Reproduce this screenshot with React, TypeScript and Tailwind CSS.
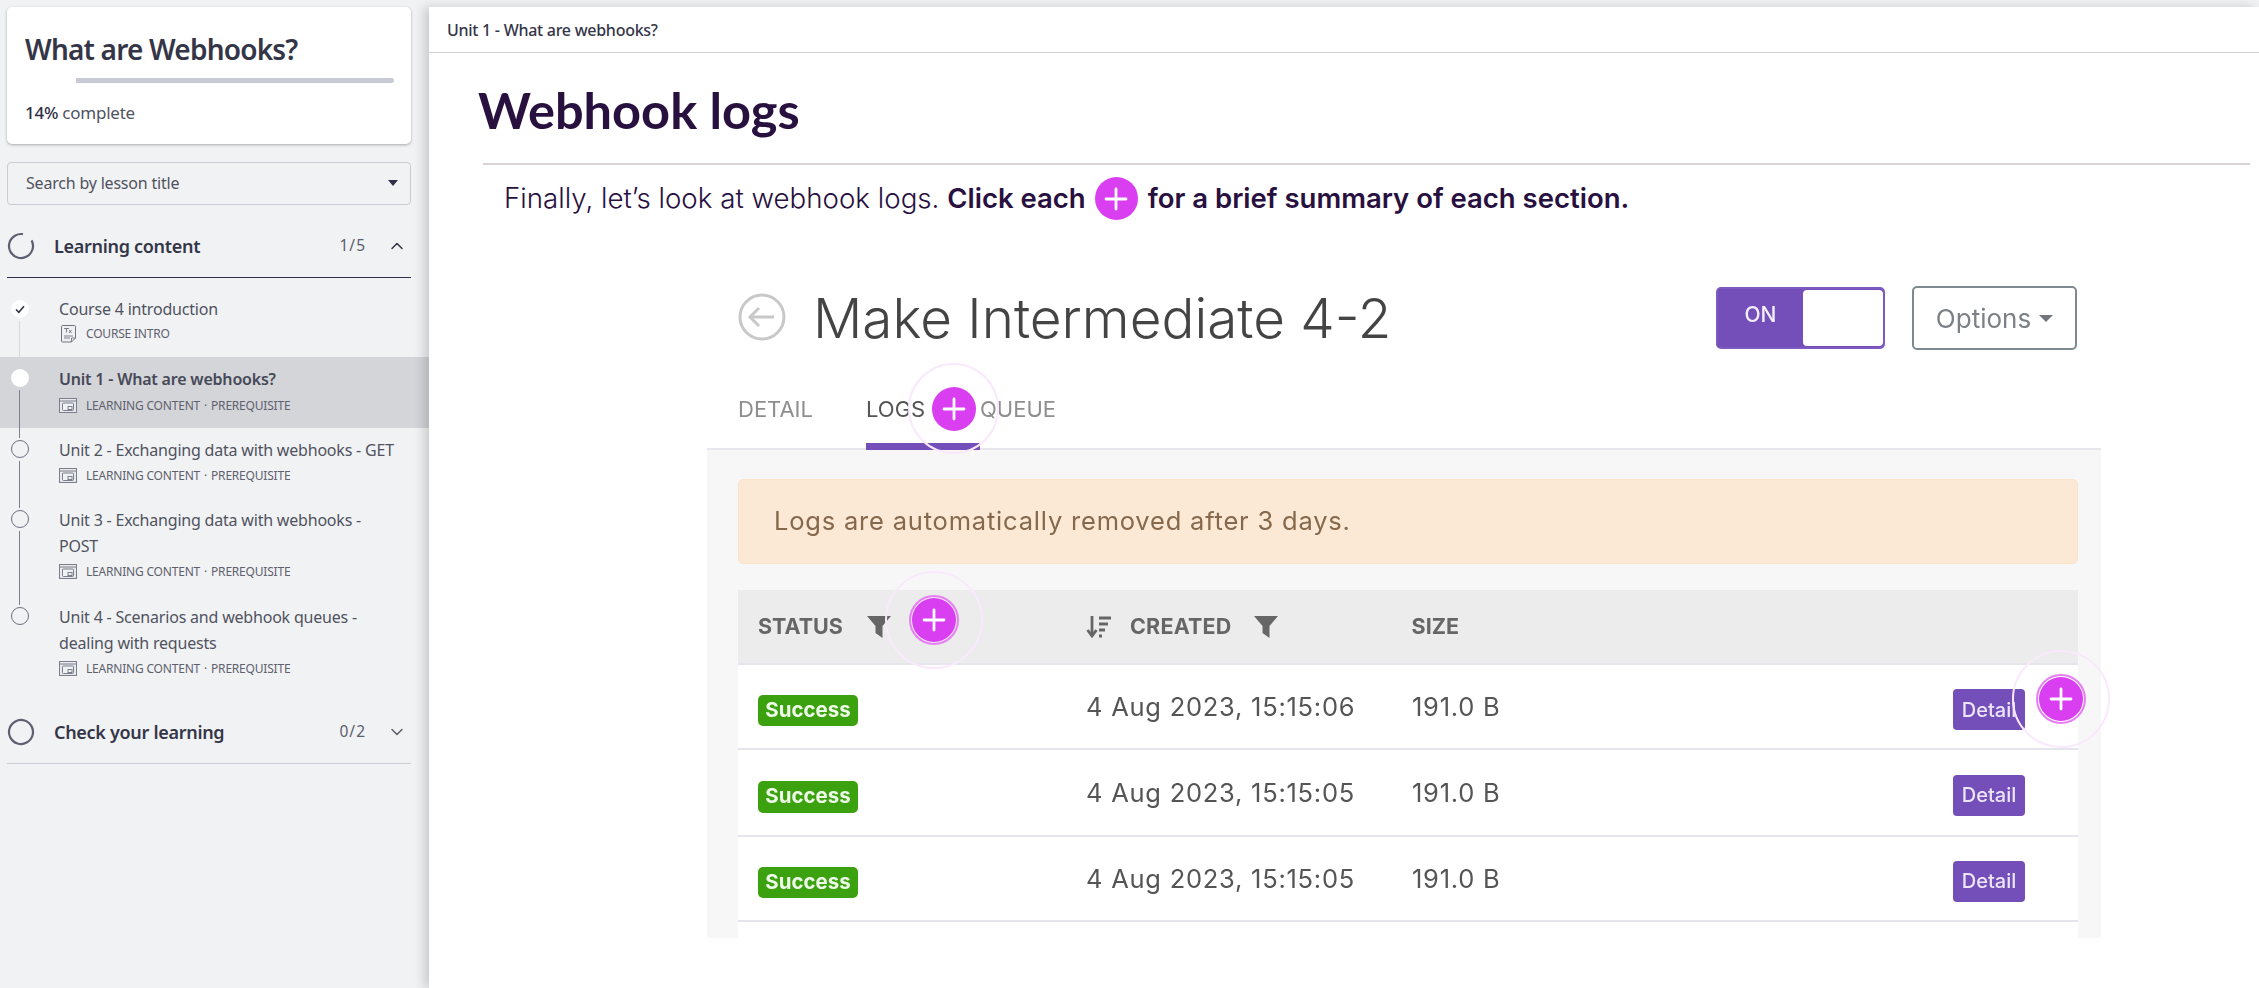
import { ChevronUp, ChevronDown } from "lucide-react";

const sans = "font-['Noto_Sans','Open_Sans',sans-serif]";

function Plus({ size = 24 }: { size?: number }) {
  return (
    <svg width={size} height={size} viewBox="0 0 24 24" fill="none" stroke="white" strokeWidth="2.8" strokeLinecap="round">
      <path d="M12 2v20M2 12h20" />
    </svg>
  );
}

function Hotspot({ className, ring }: { className: string; ring?: boolean }) {
  return (
    <div className={`absolute flex items-center justify-center rounded-full border-2 border-[#fae9fd] ${className}`}>
      <div className={`flex h-[44px] w-[44px] items-center justify-center rounded-full bg-[#d93ef0] ${ring ? "outline-2 outline-offset-1 outline-[#e77ef5]" : ""}`}>
        <Plus />
      </div>
    </div>
  );
}

function ContentIcon() {
  return (
    <svg width="18" height="16" viewBox="0 0 18 16" fill="none" stroke="#7b7e8c" strokeWidth="1" className="shrink-0">
      <rect x="0.5" y="0.5" width="17" height="14" fill="#e8e9ed" />
      <path d="M0.5 3h17" />
      <rect x="3.5" y="5" width="11" height="7.5" rx="1" fill="#f1f2f4" />
      <rect x="9" y="8.5" width="4" height="3" fill="#f1f2f4" />
    </svg>
  );
}

function IntroIcon() {
  return (
    <svg width="15" height="18" viewBox="0 0 15 18" fill="none" stroke="#71747f" strokeWidth="1" className="shrink-0">
      <path d="M1.5.5h12a1 1 0 0 1 1 1V13l-4 4H1.5a1 1 0 0 1-1-1V1.5a1 1 0 0 1 1-1z" fill="#eef0f3" />
      <path d="M3 3.5h5M5.5 3.5v4M8 5l2.5 3M10.5 5 8 8M3 11h9M3 13h6M10.500 17v-4h4" strokeWidth="0.9" />
    </svg>
  );
}

function Lesson(props: {
  title: string[];
  sub: string[];
  intro?: boolean;
  active?: boolean;
  done?: boolean;
  first?: boolean;
  last?: boolean;
  lineIn?: string;
  lineOut?: string;
  pt: string;
  mt: string;
  pb: string;
}) {
  const { title, sub, intro, active, done, first, last, lineIn, lineOut, pt, mt, pb } = props;
  return (
    <div className={`flex w-[429px] ${active ? "bg-[#d4d5d9]" : ""}`}>
      <div className="ml-[11px] flex w-[17px] shrink-0 flex-col items-center">
        <div className={`h-[10px] w-px ${first ? "" : lineIn}`} />
        <div className="h-[2px]" />
        <div
          className={`flex h-[18px] w-[18px] shrink-0 items-center justify-center rounded-full ${
            done || active ? "bg-white" : "border border-[#6d7080]"
          }`}
        >
          {done && (
            <svg width="10" height="9" viewBox="0 0 10 9" fill="none" stroke="#2d2f45" strokeWidth="1.5">
              <path d="M1 4.500 3.800 7.300 9 1.300" />
            </svg>
          )}
        </div>
        <div className="h-[3px]" />
        <div className={`w-px flex-1 ${last ? "" : lineOut}`} />
      </div>
      <div className={`ml-[31px] w-[340px] ${pt} ${pb}`}>
        {title.map((t) => (
          <div
            key={t}
            className={`h-[26px] whitespace-nowrap text-[16px] leading-[26px] tracking-[-0.2px] ${
              active ? "font-semibold text-[#464958]" : "text-[#50535f]"
            }`}
          >
            {t}
          </div>
        ))}
        <div className={`flex h-[24px] items-center gap-[9px] ${mt}`}>
          {intro ? <span className="ml-[2px] mr-[1px] flex"><IntroIcon /></span> : <ContentIcon />}
          <span className="flex items-center gap-[4px] whitespace-nowrap text-[12px] tracking-[-0.2px] text-[#5e616d]">
            {sub[0]}
            {sub[1] && <span>·</span>}
            {sub[1]}
          </span>
        </div>
      </div>
    </div>
  );
}

function SectionHead(props: { title: string; count: string; open?: boolean; spin?: boolean; dark?: boolean }) {
  const { title, count, open, spin, dark } = props;
  return (
    <div className={`mx-[7px] mt-[15px] w-[404px] border-b pb-[5px] ${dark ? "border-[#2d2f45]" : "border-[#c9ccd4]"}`}>
      <div className="flex h-[52px] items-center">
        <svg width="28" height="28" viewBox="0 0 28 28" fill="none" className="shrink-0">
          <circle cx="14" cy="14" r="12" stroke="#5d6072" strokeWidth="2.200" strokeDasharray={spin ? "64 12" : undefined} transform="rotate(-28 14 14)" />
        </svg>
        <span className="ml-[19px] flex-1 text-[18px] font-semibold tracking-[-0.3px] text-[#343648]">{title}</span>
        <span className="mr-[21px] text-[15.500px] tracking-[1px] text-[#5b5e6c]">{count}</span>
        {open ? (
          <ChevronUp size={20} strokeWidth={1.8} className="mr-[4px] text-[#343648]" />
        ) : (
          <ChevronDown size={20} strokeWidth={1.8} className="mr-[4px] text-[#5b5e6c]" />
        )}
      </div>
    </div>
  );
}

function Funnel() {
  return (
    <svg width="24" height="22" viewBox="0 0 24 22" fill="#666">
      <path d="M0 0h24l-8.500 10v12l-7-5v-7z" />
    </svg>
  );
}

function SortIcon() {
  return (
    <svg width="26" height="22" viewBox="0 0 26 22" fill="none" stroke="#666" strokeWidth="2.800">
      <path d="M6 0v19M1.500 14 6 20l4.500-6M13 2h12M13 8h9M13 14h6M13 20h3" />
    </svg>
  );
}

function Row({ date, h, bh, btnMt }: { date: string; h: string; bh: string; btnMt: string }) {
  return (
    <div className={`grid grid-cols-[348px_326px_541px_1fr] items-center border-b-2 border-[#e5e6ec] bg-white ${h}`}>
      <div className="pl-[20px]">
        <span className={`mt-[8px] flex w-[100px] items-center justify-center rounded-[5px] bg-[#3ca10f] text-[20.500px] font-bold text-[#eefbe8] ${bh}`}>Success</span>
      </div>
      <span className="mt-[2px] text-[25.500px] tracking-[0.75px] text-[#555]">{date}</span>
      <span className="mt-[2px] text-[25.500px] tracking-[0.75px] text-[#555]">191.0 B</span>
      <span className={`flex h-[41px] w-[72px] items-center justify-center rounded-[4px] bg-[#744fb9] text-[20px] font-medium text-[#ece6f8] ${btnMt}`}>Detail</span>
    </div>
  );
}

export default function App() {
  return (
    <div className={`flex h-[988px] w-[2259px] overflow-hidden bg-[#f1f2f4] ${sans}`}>
      <aside className="w-[429px] shrink-0 pt-[7px]">
        <div className="mx-[7px] h-[137px] w-[404px] rounded-[5px] bg-white px-[18px] pt-[24px] shadow-[0_1px_3px_rgba(0,0,0,0.3)]">
          <h1 className="whitespace-nowrap text-[28px] font-semibold leading-[36px] tracking-[-0.8px] text-[#343648]">What are Webhooks?</h1>
          <div className="mt-[11px] ml-[51px] h-[5px] w-[318px] rounded-r-sm bg-[#c8cbd6]" />
          <div className="mt-[18px] text-[17px] leading-[24px] tracking-[-0.25px] text-[#50535f]">
            <span className="font-medium text-[#2d2f45]">14%</span> complete
          </div>
        </div>
        <div className="mx-[7px] mt-[18px] flex h-[43px] w-[404px] items-center justify-between rounded-[4px] border border-[#c9ccd4] pb-[1px] pl-[18px] pr-[12px] text-[16px] tracking-[-0.2px] text-[#50535f]">
          Search by lesson title
          <span className="h-0 w-0 border-x-[5px] border-t-[6px] border-x-transparent border-t-[#2d2f45]" />
        </div>

        <SectionHead title="Learning content" count="1/5" open spin dark />
        <div className="mt-[10px]">
          <Lesson title={["Course 4 introduction"]} sub={["COURSE INTRO"]} intro done first lineOut="bg-[#d5d7dc]" pt="pt-[8px]" mt="" pb="pb-[11px]" />
          <Lesson title={["Unit 1 - What are webhooks?"]} sub={["LEARNING CONTENT", "PREREQUISITE"]} active lineIn="bg-[#d5d7dc]" lineOut="bg-[#7d7f8c]" pt="pt-[9px]" mt="mt-[2px]" pb="pb-[10px]" />
          <Lesson title={["Unit 2 - Exchanging data with webhooks - GET"]} sub={["LEARNING CONTENT", "PREREQUISITE"]} lineIn="bg-[#7d7f8c]" lineOut="bg-[#7d7f8c]" pt="pt-[9px]" mt="mt-[1px]" pb="pb-[10px]" />
          <Lesson title={["Unit 3 - Exchanging data with webhooks -", "POST"]} sub={["LEARNING CONTENT", "PREREQUISITE"]} lineIn="bg-[#7d7f8c]" lineOut="bg-[#7d7f8c]" pt="pt-[9px]" mt="mt-[1px]" pb="pb-[11px]" />
          <Lesson title={["Unit 4 - Scenarios and webhook queues -", "dealing with requests"]} sub={["LEARNING CONTENT", "PREREQUISITE"]} last lineIn="bg-[#7d7f8c]" pt="pt-[9px]" mt="mt-[1px]" pb="pb-[10px]" />
        </div>
        <SectionHead title="Check your learning" count="0/2" />
      </aside>

      <main className="relative mt-[7px] flex-1 bg-white shadow-[-5px_0_10px_rgba(0,0,0,0.16)]">
        <div className="flex h-[46px] items-center border-b border-[#cfd1dc] pl-[18px] text-[16px] font-medium tracking-[-0.27px] text-[#343648]">
          Unit 1 - What are webhooks?
        </div>
        <h2 className="ml-[49px] mt-[27px] h-[60px] font-['Lato',sans-serif] text-[50.500px] font-bold leading-[60px] text-[#28103f]">Webhook logs</h2>
        <div className="ml-[54px] mt-[23px] h-[2px] w-[1767px] bg-[#d8d3d6]" />
        <p className="ml-[75px] mt-[12px] flex h-[43px] items-center whitespace-pre font-['Inter',sans-serif] text-[27.700px] font-light text-[#28103f]">
          Finally, let’s look at webhook logs. <span className="text-[27.500px] font-semibold">Click each</span>
          <span className="ml-[9px] mr-[10px] flex h-[43px] w-[43px] items-center justify-center rounded-full bg-[#d93ef0]"><Plus /></span>
          <span className="text-[27.500px] font-semibold">for a brief summary of each section.</span>
        </p>

        <div className="relative ml-[278px] mt-[50px] w-[1394px] font-['Inter',sans-serif]">
          <div className="blur-[0.4px]">
            <div className="flex h-[180px] flex-col justify-between border-b-2 border-[#e6e6ec] pl-[31px] pr-[24px] pt-[16px]">
              <div className="flex h-[64px] items-center">
                <svg width="48" height="48" viewBox="0 0 48 48" fill="none" stroke="#c8c8c8" strokeWidth="3" className="mt-[-2px]">
                  <circle cx="24" cy="24" r="22" />
                  <path d="M36 24H12M21 15l-9 9 9 9" />
                </svg>
                <span className="ml-[27px] flex-1 text-[54.800px] font-light text-[#444]">Make Intermediate 4-2</span>
                <div className="flex h-[62px] w-[169px] overflow-hidden rounded-[5px] border-2 border-[#7d59c2] bg-[#744fb9]">
                  <span className="flex w-[85px] items-center justify-center pb-[6px] text-[21px] font-medium text-[#f2eefa]">ON</span>
                  <span className="my-[1px] flex-1 rounded-[4px] bg-white" />
                </div>
                <div className="ml-[27px] flex h-[64px] w-[165px] items-center justify-center gap-[8px] rounded-[5px] border-2 border-[#7d8a90] text-[26px] text-[#7b8186]">
                  Options
                  <span className="h-0 w-0 border-x-[7px] border-t-[7px] border-x-transparent border-t-[#70767b]" />
                </div>
              </div>
              <div className="mb-[-2px] flex text-[22px] text-[#8e8e8e]">
                <span className="w-[128px] pb-[17px]">DETAIL</span>
                <span className="w-[114px] border-b-[7px] border-[#744fb9] pb-[17px] pr-[54px] text-[#555]">LOGS</span>
                <span className="pb-[17px]">QUEUE</span>
              </div>
            </div>
            <div className="h-[488px] overflow-hidden bg-[#f7f7f7] pl-[31px] pr-[23px] pt-[29px]">
              <div className="flex h-[85px] items-center rounded-[5px] border border-[#fbe4c9] bg-[#fbe9d5] pl-[35px] text-[25.500px] tracking-[0.8px] text-[#86684c]">
                Logs are automatically removed after 3 days.
              </div>
              <div className="mt-[26px] w-[1340px]">
                <div className="flex h-[75px] items-center border-b-2 border-[#e5e6ec] bg-[#ececec] text-[21.500px] font-bold text-[#666]">
                  <span className="ml-[20px] w-[109px]">STATUS</span>
                  <Funnel />
                  <span className="ml-[195px] flex items-center gap-[18px]"><SortIcon /><span className="tracking-[0.2px]">CREATED</span></span>
                  <span className="ml-[22px]"><Funnel /></span>
                  <span className="ml-[134px]">SIZE</span>
                </div>
                <Row date="4 Aug 2023, 15:15:06" h="h-[85px]" bh="h-[31px]" btnMt="mt-[6px]" />
                <Row date="4 Aug 2023, 15:15:05" h="h-[87px]" bh="h-[32px]" btnMt="mt-[5px]" />
                <Row date="4 Aug 2023, 15:15:05" h="h-[85px]" bh="h-[31px]" btnMt="mt-[5px]" />
                <div className="h-[20px] bg-white" />
              </div>
            </div>
          </div>
          <Hotspot className="left-[201px] top-[93px] h-[91px] w-[91px]" />
          <Hotspot className="left-[178px] top-[301px] h-[98px] w-[98px]" ring />
          <Hotspot className="left-[1305px] top-[380px] h-[98px] w-[98px]" ring />
        </div>
      </main>
    </div>
  );
}
